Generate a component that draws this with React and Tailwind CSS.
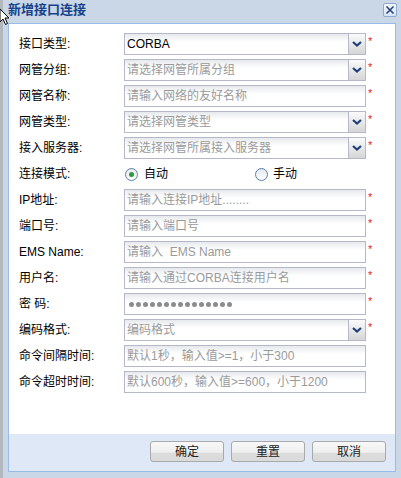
import React from "react";

const rows = [
  { label: "接口类型:", type: "select", value: "CORBA", req: true },
  { label: "网管分组:", type: "select", ph: "请选择网管所属分组", req: true },
  { label: "网管名称:", type: "input", ph: "请输入网络的友好名称", req: true },
  { label: "网管类型:", type: "select", ph: "请选择网管类型", req: true },
  { label: "接入服务器:", type: "select", ph: "请选择网管所属接入服务器", req: true },
  { label: "连接模式:", type: "radio" },
  { label: "IP地址:", type: "input", ph: "请输入连接IP地址........", req: true },
  { label: "端口号:", type: "input", ph: "请输入端口号", req: true },
  { label: "EMS Name:", type: "input", ph: "请输入  EMS Name", req: true },
  { label: "用户名:", type: "input", ph: "请输入通过CORBA连接用户名", req: true },
  { label: "密 码:", type: "password", req: true },
  { label: "编码格式:", type: "select", ph: "编码格式", req: true },
  { label: "命令间隔时间:", type: "input", ph: "默认1秒，输入值>=1，小于300" },
  { label: "命令超时时间:", type: "input", ph: "默认600秒，输入值>=600，小于1200" },
];

function Field({ row }) {
  const text = row.value ? (
    <span className="text-black whitespace-pre">{row.value}</span>
  ) : row.ph ? (
    <span className="text-[#9a9a9a] whitespace-pre">{row.ph}</span>
  ) : null;
  return (
    <div className="w-[242px] h-[22px] border border-[#b5b8c8] bg-[linear-gradient(to_bottom,#e6e9ec,#ffffff_8px)] flex items-stretch">
      <div className="flex-1 flex items-center pl-[2px] text-[12px] leading-none overflow-hidden">
        {row.type === "password" ? (
          <div className="flex gap-[2px] pl-[2px]">
            {Array.from({ length: 15 }).map((_, i) => (
              <span key={i} className="w-[5px] h-[5px] rounded-full bg-[#8c8c8c]" />
            ))}
          </div>
        ) : (
          text
        )}
      </div>
      {row.type === "select" && (
        <div className="w-[17px] border-l border-[#b5b8c8] bg-[linear-gradient(to_bottom,#fbfbfb,#e4e4e4_60%,#d6d6d6)] flex items-center justify-center">
          <svg width="10" height="6" viewBox="0 0 10 6">
            <polyline points="1,1 5,4.5 9,1" fill="none" stroke="#1f3f7a" strokeWidth="2.2" />
          </svg>
        </div>
      )}
    </div>
  );
}

function Radio({ checked }) {
  return (
    <span className="w-[13px] h-[13px] rounded-full border border-[#5d7fa8] bg-[linear-gradient(to_bottom,#e4e8ee,#ffffff)] flex items-center justify-center">
      {checked && <span className="w-[5px] h-[5px] rounded-full bg-[#2b9a3a]" />}
    </span>
  );
}

function Btn({ children }) {
  return (
    <div className="w-[74px] h-[21px] rounded-[3px] border border-[#a9a9a9] bg-[linear-gradient(to_bottom,#f8f8f8_0%,#efefef_55%,#dcdcdc_56%,#dadada_100%)] flex items-center justify-center text-[12px] leading-none text-[#222]">
      {children}
    </div>
  );
}

export default function App() {
  return (
    <div className="relative w-[401px] h-[478px] flex bg-[#cad7e6] font-['Liberation_Sans','Noto_Sans_CJK_SC',sans-serif] overflow-hidden">
      <div className="w-[3px] bg-[#b3b8bf]" />
      <div className="flex-1 flex flex-col pl-[5px] pr-[5px]">
        <div className="h-[23px] flex items-center justify-between">
          <span className="text-[13px] font-bold text-[#15428b] leading-none -mt-[4px]">新增接口连接</span>
          <div className="w-[14px] h-[14px] -mt-[4px] -mr-[1px] border border-[#8eaad0] rounded-[2px] bg-[linear-gradient(to_bottom,#f2f6fb,#d8e3f1)] flex items-center justify-center">
            <svg width="10" height="10" viewBox="0 0 10 10">
              <path d="M1.5 1.5 L8.5 8.5 M8.5 1.5 L1.5 8.5" stroke="#1d3f7c" strokeWidth="1.5" />
            </svg>
          </div>
        </div>
        <div className="h-[449px] border border-[#99bbe8] flex flex-col">
          <div className="h-[410px] bg-white pt-[9px] pl-[10px] flex flex-col gap-[4px]">
            {rows.map((row, i) => (
              <div key={i} className="h-[22px] flex items-center">
                <div className="w-[105px] text-[12px] leading-none text-black whitespace-pre">{row.label}</div>
                {row.type === "radio" ? (
                  <div className="flex items-center pl-[1px]">
                    <div className="w-[130px] flex items-center gap-[6px]">
                      <Radio checked />
                      <span className="text-[12px] leading-none text-black">自动</span>
                    </div>
                    <div className="flex items-center gap-[5px]">
                      <Radio />
                      <span className="text-[12px] leading-none text-black">手动</span>
                    </div>
                  </div>
                ) : (
                  <>
                    <Field row={row} />
                    {row.req && (
                      <span className="self-start ml-[2px] mt-[3px] text-[11px] leading-none text-[#e8202a]">*</span>
                    )}
                  </>
                )}
              </div>
            ))}
          </div>
          <div className="flex-1 bg-[#dfe8f6] flex justify-end gap-[7px] pt-[7px] pr-[9px]">
            <Btn>确定</Btn>
            <Btn>重置</Btn>
            <Btn>取消</Btn>
          </div>
        </div>
      </div>
      <svg className="absolute left-[-1px] top-[8px]" width="10" height="18" viewBox="0 0 10 18">
        <path d="M1 1 L1 14 L4 11 L6.5 16.5 L8.5 15.5 L6 10 L10 10 Z" fill="#fff" stroke="#000" strokeWidth="1" />
      </svg>
    </div>
  );
}
